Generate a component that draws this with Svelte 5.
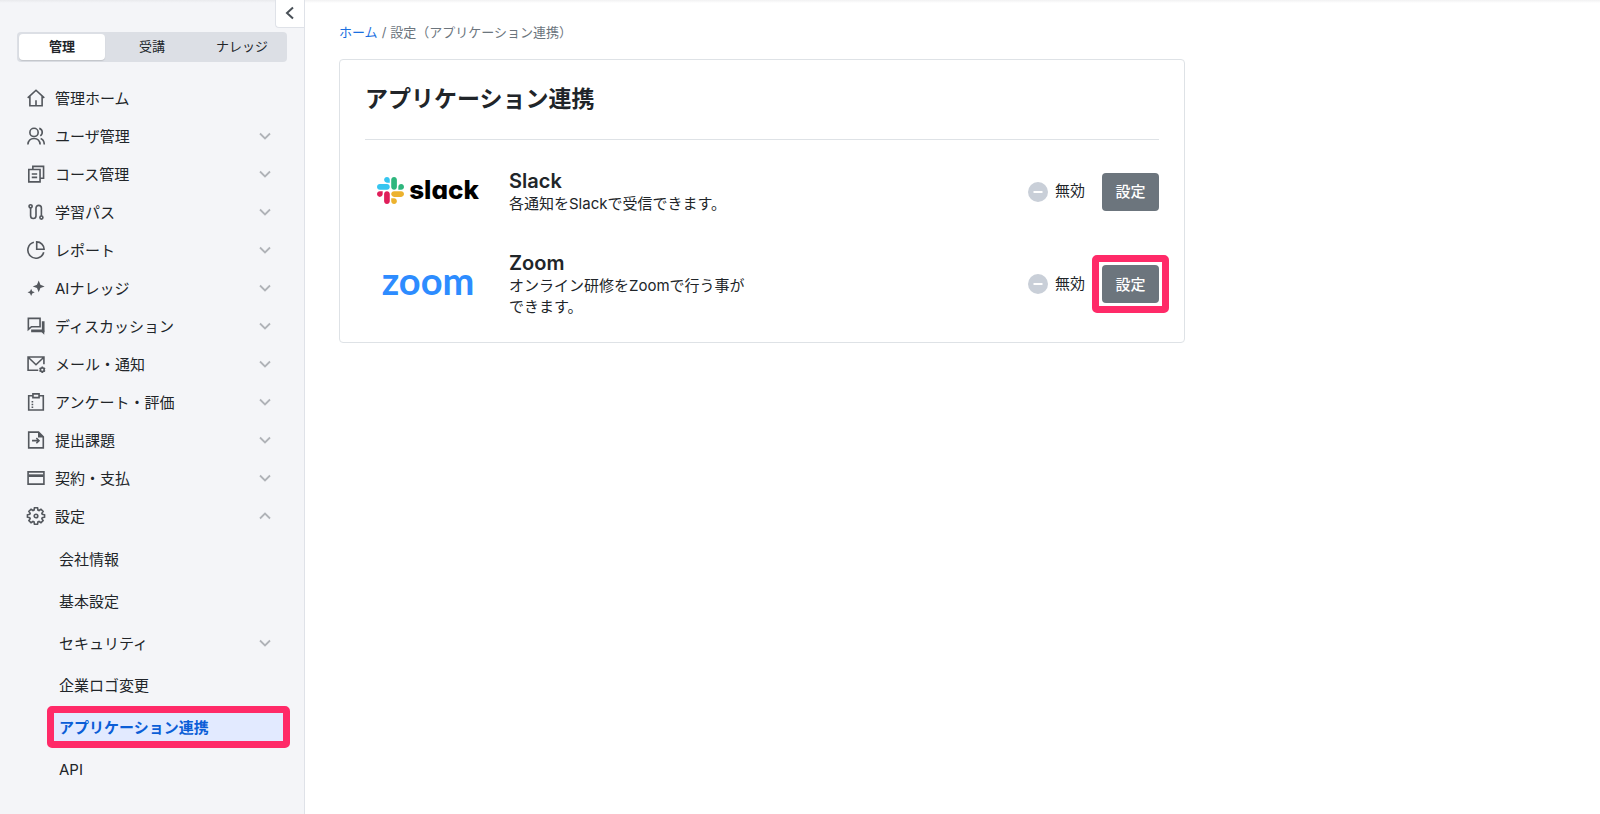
<script>
	const tabs = ['管理', '受講', 'ナレッジ'];
	let activeTab = '管理';
	let settingsOpen = true;

	const menu = [
		{ icon: 'home', label: '管理ホーム', href: '#home' },
		{ icon: 'users', label: 'ユーザ管理' },
		{ icon: 'course', label: 'コース管理' },
		{ icon: 'path', label: '学習パス' },
		{ icon: 'report', label: 'レポート' },
		{ icon: 'ai', label: 'AIナレッジ' },
		{ icon: 'discussion', label: 'ディスカッション' },
		{ icon: 'mail', label: 'メール・通知' },
		{ icon: 'survey', label: 'アンケート・評価' },
		{ icon: 'submit', label: '提出課題' },
		{ icon: 'card', label: '契約・支払' }
	];

	const settings = [
		{ label: '会社情報', href: '#company' },
		{ label: '基本設定', href: '#basic' },
		{ label: 'セキュリティ' },
		{ label: '企業ロゴ変更', href: '#logo' },
		{ label: 'アプリケーション連携', href: '#apps', active: true },
		{ label: 'API', href: '#api' }
	];

	const apps = [
		{ id: 'slack', name: 'Slack', text: '各通知をSlackで受信できます。' },
		{ id: 'zoom', name: 'Zoom', text: 'オンライン研修をZoomで行う事ができます。', marked: true }
	];

	const icons = {
		home: '<path d="M.8 9.800 10 1.400l9.200 8.400M3.200 8v10.600h13.600V8M10 18v-5.600"/>',
		users:
			'<circle cx="7.800" cy="6" r="4.600"/><path d="M1 19.400c.4-4.600 3-6.600 6.800-6.600s6.400 2 6.800 6.600M13.600 1.500a4.600 4.600 0 0 1 1.200 8.300M15.200 12.800c2.400.8 3.800 3 4 6.600"/>',
		course:
			'<path d="M6.500 5V1.500h11.900v13.200h-3.900M2 5h12.500v13.800H2zM5.300 10h6M5.300 13.800h6"/>',
		path: '<circle cx="4" cy="3.600" r="1.700"/><circle cx="16" cy="16.200" r="1.700"/><path d="M4 5.300v8.900a3 3 0 0 0 6 0V5.600a3 3 0 0 1 6 0v8.900"/>',
		report:
			'<path d="M7.600 1.400A9 9 0 1 0 18.600 12.600M10.800 1v8.200H19A8.200 8.200 0 0 0 10.800 1z"/>',
		ai: '<path class="fill" d="M13 1.600l1.900 4.700 4.700 1.900-4.700 1.900L13 14.800l-1.900-4.700-4.700-1.900 4.700-1.900zM4.600 10.800l1.200 2.800 2.800 1.200-2.800 1.200-1.200 2.800-1.200-2.800-2.800-1.200 2.800-1.200z"/>',
		discussion:
			'<path d="M1.500 1.500h13v9.300H5l-3.500 3z"/><path class="heavy" d="M18 4.600V17M4.600 15.400H18"/><path class="fill" d="M14.500 15h4.700v4.600z"/>',
		mail: '<path d="M12.500 17H1.200V2.200h17.600v8M1.600 2.800l8.400 8 8.400-8"/><circle cx="17" cy="16.400" r="2.100"/><path d="M17 12.800v1.500M17 18.500V20M13.900 14.600l1.200.7M18.900 17.500l1.200.7M13.900 18.200l1.200-.7M18.900 15.300l1.200-.7"/>',
		survey:
			'<path d="M6.600 3H1.900v15.900h16.200V3h-4.700"/><path d="M6.600 1h6.800v4.200H6.600z"/><path d="M6 9v1.600M6 12v1.600M6 15v1.600"/>',
		submit:
			'<path d="M1.900 1.200h10.900l5.300 5.300v12.300H1.900z"/><path class="fill" d="M12.200 1.200l5.900 5.900h-5.900z"/><path d="M5.600 10.700h7.600M10.400 7.800l2.900 2.900-2.900 2.900"/>',
		card: '<path d="M1.200 3.200h17.600v13.600H1.200z"/><path class="heavy" d="M1.600 7.400h16.800"/>',
		gear: '<path d="M8.300.9h3.400l.5 2.500 1.200.5 2.100-1.400 2.400 2.400-1.400 2.100.5 1.200 2.500.5v2.600l-2.500.5-.5 1.200 1.400 2.100-2.400 2.400-2.100-1.400-1.200.5-.5 2.500H8.300l-.5-2.500-1.200-.5-2.100 1.400-2.400-2.400L3.500 13 3 11.800l-2.500-.5V8.700L3 8.200l.5-1.200-1.400-2.100 2.400-2.400 2.100 1.400 1.200-.5z"/><circle cx="10" cy="10" r="2"/>'
	};
</script>

{#snippet icon(name)}
	<svg class="icon" viewBox="0 0 20 20" aria-hidden="true">{@html icons[name]}</svg>
{/snippet}

{#snippet chevron(up)}
	<svg class="chevron" class:up viewBox="0 0 12 8" aria-hidden="true">
		<path d="M1 1.500 6 6.500l5-5" />
	</svg>
{/snippet}

<div class="page">
	<aside>
		<button class="collapse" aria-label="メニューを閉じる">
			<svg viewBox="0 0 10 14" aria-hidden="true"><path d="M8 1.500 2 7l6 5.500" /></svg>
		</button>

		<div class="tabs">
			{#each tabs as tab}
				<button class:active={tab === activeTab} on:click={() => (activeTab = tab)}>{tab}</button>
			{/each}
		</div>

		<nav>
			<ul>
				{#each menu as item}
					<li>
						{#if item.href}
							<a class="item" href={item.href}>{@render icon(item.icon)}<span>{item.label}</span></a>
						{:else}
							<button class="item">
								{@render icon(item.icon)}<span>{item.label}</span>{@render chevron(false)}
							</button>
						{/if}
					</li>
				{/each}
				<li>
					<button class="item" on:click={() => (settingsOpen = !settingsOpen)}>
						{@render icon('gear')}<span>設定</span>{@render chevron(settingsOpen)}
					</button>
					{#if settingsOpen}
						<ul class="sub">
							{#each settings as item}
								<li>
									{#if item.href}
										<a class="subitem" class:active={item.active} href={item.href}>{item.label}</a>
									{:else}
										<button class="subitem"><span>{item.label}</span>{@render chevron(false)}</button>
									{/if}
								</li>
							{/each}
						</ul>
					{/if}
				</li>
			</ul>
		</nav>
	</aside>

	<main>
		<div class="breadcrumb">
			<a href="#home">ホーム</a><span>/</span><span>設定（アプリケーション連携）</span>
		</div>

		<section class="card">
			<h1>アプリケーション連携</h1>
			{#each apps as app}
				<div class="app">
					<div class="logo {app.id}">
						{#if app.id === 'slack'}
							<svg viewBox="0 0 122.800 122.800" aria-hidden="true">
								<path fill="#e01e5a" d="M25.800 77.600c0 7.100-5.800 12.900-12.900 12.900S0 84.700 0 77.600s5.800-12.900 12.900-12.900h12.900zM32.300 77.600c0-7.100 5.800-12.900 12.900-12.900s12.900 5.800 12.900 12.900v32.300c0 7.100-5.800 12.900-12.900 12.900s-12.900-5.800-12.900-12.900z" />
								<path fill="#36c5f0" d="M45.200 25.800c-7.100 0-12.900-5.800-12.900-12.900S38.100 0 45.200 0s12.900 5.800 12.900 12.900v12.900zM45.200 32.300c7.100 0 12.900 5.800 12.900 12.900s-5.800 12.900-12.900 12.900H12.900C5.800 58.100 0 52.300 0 45.200s5.800-12.900 12.900-12.900z" />
								<path fill="#2eb67d" d="M97 45.200c0-7.100 5.800-12.900 12.900-12.900s12.900 5.800 12.900 12.900-5.800 12.900-12.900 12.900H97zM90.500 45.200c0 7.100-5.800 12.900-12.900 12.900s-12.900-5.800-12.900-12.900V12.900C64.700 5.800 70.500 0 77.600 0s12.900 5.800 12.900 12.900z" />
								<path fill="#ecb22e" d="M77.600 97c7.100 0 12.900 5.800 12.900 12.900s-5.800 12.900-12.900 12.900-12.900-5.800-12.900-12.900V97zM77.600 90.500c-7.100 0-12.900-5.800-12.900-12.900s5.800-12.900 12.900-12.900h32.300c7.100 0 12.900 5.800 12.900 12.900s-5.800 12.900-12.900 12.900z" />
							</svg>
						{/if}
						<span>{app.id}</span>
					</div>
					<div class="about">
						<h2>{app.name}</h2>
						<p>{app.text}</p>
					</div>
					<div class="status">
						<svg viewBox="0 0 20 20" aria-hidden="true">
							<circle cx="10" cy="10" r="10" />
							<path d="M5.500 10h9" />
						</svg>
						<span>無効</span>
					</div>
					<button class="configure" class:marked={app.marked}>設定</button>
				</div>
			{/each}
		</section>
	</main>
</div>

<style>
	:global(body) {
		margin: 0;
		background: #fff;
		color: #212529;
		font-family: Inter, 'Noto Sans CJK JP', sans-serif;
		font-size: 15px;
		line-height: 21px;
	}
	* {
		box-sizing: border-box;
	}
	button {
		font: inherit;
		color: inherit;
		background: none;
		border: 0;
		padding: 0;
		cursor: pointer;
	}
	a {
		color: inherit;
		text-decoration: none;
	}
	ul {
		list-style: none;
		margin: 0;
		padding: 0;
	}
	.page {
		display: flex;
		min-height: 100vh;
		background: linear-gradient(#f1f1f2, #fff 3px);
	}
	aside {
		position: relative;
		flex: none;
		width: 305px;
		padding: 32px 17px 20px;
		background: linear-gradient(#e9eaed, #f4f5f8 3px);
		border-right: 1px solid #dfe2e8;
	}
	.collapse {
		position: absolute;
		top: 0;
		right: 0;
		display: flex;
		align-items: center;
		justify-content: center;
		width: 29px;
		height: 28px;
		padding-bottom: 2px;
		background: #fff;
		border: 1px solid #dfe2e8;
		border-width: 0 0 1px 1px;
		border-radius: 0 0 0 4px;
	}
	.collapse svg {
		width: 10px;
		height: 14px;
		fill: none;
		stroke: #495057;
		stroke-width: 2;
	}
	.tabs {
		display: grid;
		grid-template-columns: repeat(3, 1fr);
		gap: 4px;
		padding: 2px;
		background: #dcdfe5;
		border-radius: 4px;
	}
	.tabs button {
		height: 26px;
		padding-bottom: 2px;
		border-radius: 4px;
		font-size: 13px;
	}
	.tabs button.active {
		background: #fff;
		font-weight: 700;
		box-shadow: 0 1px 1px #0000001f;
	}
	nav {
		padding-top: 17px;
	}
	.item {
		display: flex;
		align-items: center;
		gap: 10px;
		width: 100%;
		height: 38px;
		padding: 0 16px 0 10px;
		text-align: left;
	}
	.item span,
	.subitem span {
		flex: 1;
	}
	.icon {
		width: 18px;
		height: 18px;
		overflow: visible;
		fill: none;
		stroke: #54585e;
		stroke-width: 1.8;
	}
	.icon :global(.heavy) {
		stroke-width: 3;
	}
	.icon :global(.fill) {
		fill: #54585e;
		stroke: none;
	}
	.chevron {
		width: 12px;
		height: 8px;
		fill: none;
		stroke: #b0b3b8;
		stroke-width: 1.8;
	}
	.chevron.up {
		transform: rotate(180deg);
	}
	.sub {
		padding: 3px 0 0 30px;
		margin-right: -3px;
	}
	.subitem {
		display: flex;
		align-items: center;
		width: 100%;
		height: 42px;
		padding: 0 19px 0 12px;
		text-align: left;
	}
	.subitem.active {
		padding: 0 5px;
		border: 7px solid #ff2a68;
		border-radius: 5px;
		background: #e2eaff;
		color: #0b5ed7;
		font-weight: 700;
	}
	main {
		flex: 1;
		min-width: 0;
		padding: 22px 34px;
	}
	.breadcrumb {
		display: flex;
		gap: 4px;
		margin-bottom: 16px;
		font-size: 13px;
		color: #6c757d;
	}
	.breadcrumb a {
		color: #1a6fe0;
	}
	.card {
		max-width: 846px;
		padding: 25px;
		border: 1px solid #dee2e6;
		border-radius: 4px;
	}
	h1 {
		margin: 0 0 29px;
		padding-bottom: 26px;
		border-bottom: 1px solid #dee2e6;
		font-size: 23px;
		line-height: 28px;
		font-weight: 700;
	}
	.app {
		display: flex;
		align-items: center;
	}
	.app + .app {
		margin-top: 37px;
	}
	.logo {
		display: flex;
		align-items: center;
		justify-content: center;
		gap: 5px;
		width: 126px;
		margin-right: 18px;
		padding-bottom: 2px;
	}
	.logo svg {
		width: 27px;
		height: 27px;
	}
	.slack span {
		padding-bottom: 2px;
		color: #000;
		font-size: 26px;
		font-weight: 800;
		font-feature-settings: 'cv11';
	}
	.zoom span {
		padding-bottom: 6px;
		color: #2d8cff;
		font-family: Lato, sans-serif;
		font-size: 38px;
		font-weight: 700;
	}
	.about {
		width: 240px;
	}
	h2 {
		margin: 0;
		font-size: 20px;
		line-height: 24px;
		font-weight: 600;
	}
	p {
		margin: 0;
	}
	.status {
		display: flex;
		align-items: center;
		gap: 7px;
		margin-left: auto;
		margin-right: 17px;
	}
	.status svg {
		width: 20px;
		height: 20px;
		fill: #c9cfd8;
		stroke: #fff;
		stroke-width: 2px;
	}
	.status circle {
		stroke: none;
	}
	.status span {
		padding-bottom: 2px;
	}
	.configure {
		position: relative;
		width: 57px;
		height: 38px;
		background: #6c757d;
		border-radius: 4px;
		color: #fff;
		font-weight: 500;
	}
	.marked::after {
		content: '';
		position: absolute;
		inset: -10px;
		border: 7px solid #ff2a68;
		border-radius: 5px;
	}
</style>
